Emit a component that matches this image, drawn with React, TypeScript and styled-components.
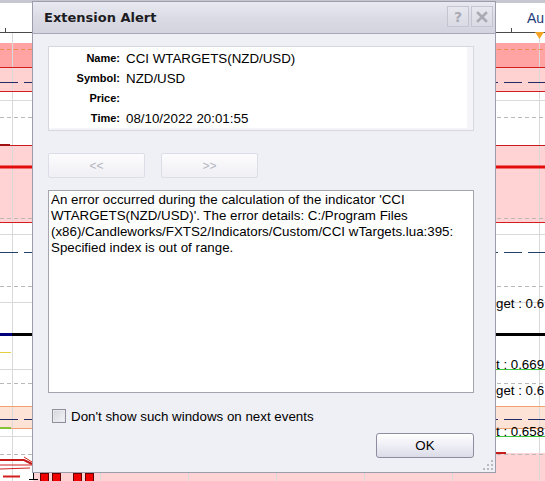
import React from "react";
import styled, { createGlobalStyle } from "styled-components";

const GlobalStyle = createGlobalStyle`
  html, body {
    margin: 0;
    padding: 0;
    background: #fff;
    overflow: hidden;
  }
`;

const W = 545;
const H = 481;

interface Band {
  x?: number;
  y: number;
  h: number;
  fill: string;
}

interface HLine {
  y: number;
  x1?: number;
  x2?: number;
  color: string;
  w?: number;
  dash?: string;
}

const GRID = "#d9d9d9";
const DASH_GRAY = "#b9b9b9";
const RED = "#d41e1e";
const NAVY = "#1d2b66";

const bands: Band[] = [
  { y: 43, h: 24, fill: "#ffa3a3" },
  { y: 67, h: 24, fill: "#ffd2d2" },
  { y: 145, h: 77, fill: "#ffd3d3" },
  { y: 406, h: 22, fill: "#fde3d5" },
  { x: 33, y: 453, h: 28, fill: "#ffd3d3" },
];

const lines: HLine[] = [
  { y: 32.5, color: "#4a4a4a" },
  { y: 49.5, color: "#f08c52", dash: "4 3" },
  { y: 67.5, color: RED },
  { y: 82.5, color: NAVY, dash: "18 6" },
  { y: 91.5, color: RED },
  { y: 100.5, color: GRID },
  { y: 117.5, color: DASH_GRAY, dash: "4 3" },
  { y: 145.5, color: "#c81c1c" },
  { y: 145, x1: 0, x2: 10, color: "#a01010", w: 2 },
  { y: 167, color: "#e30b0b", w: 3 },
  { y: 218.5, color: DASH_GRAY, dash: "4 3" },
  { y: 222.5, color: RED },
  { y: 234.5, color: GRID },
  { y: 252.5, color: "#23406c", dash: "18 6" },
  { y: 286.5, color: DASH_GRAY, dash: "4 3" },
  { y: 302.5, color: GRID },
  { y: 334.5, color: "#000", w: 3 },
  { y: 334.5, x1: 0, x2: 12, color: "#00007a", w: 3 },
  { y: 352.5, x1: 0, x2: 11, color: "#e2d040" },
  { y: 369.5, color: GRID },
  { y: 369.5, x1: 496, x2: W, color: "#3cc43c" },
  { y: 383.5, color: DASH_GRAY, dash: "4 3" },
  { y: 406.5, color: "#f2a070" },
  { y: 419.5, color: NAVY, dash: "18 6" },
  { y: 428.5, color: "#f2a070" },
  { y: 428, x1: 0, x2: 11, color: "#86c232", w: 2 },
  { y: 436.5, color: GRID },
  { y: 436.5, x1: 496, x2: W, color: "#3cc43c" },
  { y: 454.5, color: DASH_GRAY, dash: "4 3" },
  { y: 453, x1: 496, x2: 506, color: "#c81c1c", w: 2 },
  { y: 476.5, x1: 3, x2: 20, color: RED, w: 2 },
];

const gridX = [12, 100, 188, 276, 364, 452, 539];

const labels = [
  { y: 308, text: "get : 0.6" },
  { y: 369, text: "t : 0.669" },
  { y: 395, text: "get : 0.6" },
  { y: 436, text: "t : 0.658" },
];

const candles = [40, 52, 73, 85];

function Chart() {
  return (
    <ChartSvg width={W} height={H} viewBox={`0 0 ${W} ${H}`}>
      <rect x={0} y={0} width={W} height={3} fill="#c6c7d1" />
      {bands.map((b, i) => (
        <rect key={i} x={b.x ?? 0} y={b.y} width={W - (b.x ?? 0)} height={b.h} fill={b.fill} />
      ))}
      {gridX.map((x) => (
        <line key={x} x1={x + 0.5} x2={x + 0.5} y1={33} y2={H} stroke={GRID} />
      ))}
      {lines.map((l, i) => (
        <line
          key={i}
          x1={l.x1 ?? 0}
          x2={l.x2 ?? W}
          y1={l.y}
          y2={l.y}
          stroke={l.color}
          strokeWidth={l.w ?? 1}
          strokeDasharray={l.dash}
        />
      ))}
      {/* axis ticks and marker */}
      <line x1={5.5} x2={5.5} y1={28} y2={33} stroke="#4a4a4a" />
      <line x1={511.5} x2={511.5} y1={28} y2={33} stroke="#4a4a4a" />
      <polygon points="535,32 544,32 539.5,39" fill="#f5a524" />
      <text x={527} y={23} fontSize={14} fill="#233a78" fontFamily="Liberation Sans, Arial, sans-serif">
        Au
      </text>
      {/* candle bits lower left */}
      <polyline points="0,460 24,460 32,464" fill="none" stroke="#c41a1a" strokeWidth={2} />
      <polyline points="0,465 32,465" fill="none" stroke="#d42020" />
      <polyline points="24,457 32,462" fill="none" stroke="#d42020" />
      <polyline points="0,469 30,468" fill="none" stroke="#d42020" />
      <line x1={33.5} x2={33.5} y1={473} y2={480} stroke="#000" />
      <line x1={29} x2={38} y1={479.5} y2={479.5} stroke="#000" />
      {candles.map((x) => (
        <rect key={x} x={x + 0.5} y={473.5} width={8} height={9} fill="#f00000" stroke="#600" />
      ))}
      {labels.map((l, i) => (
        <text key={i} x={496} y={l.y} fontSize={13.3} fill="#000" fontFamily="Liberation Sans, Arial, sans-serif">
          {l.text}
        </text>
      ))}
    </ChartSvg>
  );
}

function Grip() {
  const dots = [
    [9, 1],
    [9, 5],
    [5, 5],
    [9, 9],
    [5, 9],
    [1, 9],
  ];
  return (
    <GripSvg width={12} height={12} viewBox="0 0 12 12">
      {dots.map(([x, y], i) => (
        <rect key={i} x={x} y={y} width={2} height={2} fill="#b9bac4" />
      ))}
    </GripSvg>
  );
}

const info = [
  { label: "Name:", value: "CCI WTARGETS(NZD/USD)" },
  { label: "Symbol:", value: "NZD/USD" },
  { label: "Price:", value: "" },
  { label: "Time:", value: "08/10/2022 20:01:55" },
];

export default function App() {
  return (
    <Page>
      <GlobalStyle />
      <Chart />
      <Dialog>
        <TitleBar>
          <Title>Extension Alert</Title>
          <CaptionButton>?</CaptionButton>
          <CaptionButton>
            <svg width="12" height="12" viewBox="0 0 12 12">
              <path d="M2 2 L10 10 M10 2 L2 10" stroke="#a9aab4" strokeWidth="2.6" strokeLinecap="square" />
            </svg>
          </CaptionButton>
        </TitleBar>
        <Body>
          <InfoPanel>
            {info.map((row) => (
              <React.Fragment key={row.label}>
                <InfoLabel>{row.label}</InfoLabel>
                <InfoValue>{row.value}</InfoValue>
              </React.Fragment>
            ))}
          </InfoPanel>
          <NavRow>
            <NavButton disabled>&lt;&lt;</NavButton>
            <NavButton disabled>&gt;&gt;</NavButton>
          </NavRow>
          <MessageBox>
            An error occurred during the calculation of the indicator 'CCI
            <br />
            WTARGETS(NZD/USD)'. The error details: C:/Program Files
            <br />
            (x86)/Candleworks/FXTS2/Indicators/Custom/CCI wTargets.lua:395:
            <br />
            Specified index is out of range.
          </MessageBox>
          <CheckRow>
            <CheckBox />
            <CheckLabel>Don't show such windows on next events</CheckLabel>
          </CheckRow>
          <Footer>
            <OkButton>OK</OkButton>
          </Footer>
        </Body>
        <Grip />
      </Dialog>
    </Page>
  );
}

const Page = styled.div`
  position: relative;
  width: ${W}px;
  height: ${H}px;
  overflow: hidden;
  background: #fff;
  font-family: "Liberation Sans", Arial, sans-serif;
`;

const ChartSvg = styled.svg`
  display: block;
`;

const Dialog = styled.div`
  position: absolute;
  left: 32px;
  top: 1px;
  width: 464px;
  height: 472px;
  box-sizing: border-box;
  border: 1px solid #9c9daa;
  background: #efeff6;
  display: flex;
  flex-direction: column;
  color: #000;
`;

const TitleBar = styled.div`
  height: 32px;
  box-sizing: border-box;
  flex: none;
  display: flex;
  align-items: center;
  padding: 0 2px 2px 11px;
  background: linear-gradient(#e9e9f1, #d9dae4 55%, #d2d3de);
  border-bottom: 1px solid #a8a9b8;
`;

const Title = styled.div`
  flex: 1;
  font-family: "DejaVu Sans", Verdana, sans-serif;
  font-weight: bold;
  font-size: 13px;
  color: #1c1c22;
  padding-top: 2px;
`;

const CaptionButton = styled.div`
  width: 22px;
  height: 21px;
  box-sizing: border-box;
  margin-left: 2px;
  border: 1px solid #c4c5d0;
  background: linear-gradient(#e7e7ef, #dadae4);
  display: flex;
  align-items: center;
  justify-content: center;
  font-family: "DejaVu Sans", Verdana, sans-serif;
  font-weight: bold;
  font-size: 14px;
  color: #a9aab4;
`;

const Body = styled.div`
  flex: 1;
  display: flex;
  flex-direction: column;
  padding: 12px 21px 0 15px;
`;

const InfoPanel = styled.div`
  height: 85px;
  box-sizing: border-box;
  border: 1px solid #d6d7e0;
  background: #fff;
  box-shadow: inset -6px -2px 0 #f4f4f9;
  display: grid;
  grid-template-columns: 71px 1fr;
  grid-auto-rows: 20px;
  column-gap: 6px;
  align-items: center;
  padding-top: 1px;
`;

const InfoLabel = styled.div`
  text-align: right;
  font-weight: bold;
  font-size: 11px;
`;

const InfoValue = styled.div`
  font-size: 13.33px;
`;

const NavRow = styled.div`
  display: flex;
  gap: 16px;
  margin-top: 22px;
`;

const NavButton = styled.button`
  width: 97px;
  height: 25px;
  box-sizing: border-box;
  border: 1px solid #dcdde6;
  border-radius: 2px;
  background: linear-gradient(#fcfcfe, #efeff4);
  color: #b4b5be;
  font-family: "Liberation Sans", Arial, sans-serif;
  font-size: 12px;
  padding: 0;
`;

const MessageBox = styled.div`
  margin-top: 12px;
  height: 203px;
  box-sizing: border-box;
  border: 1px solid #a4a5ae;
  background: #fff;
  padding: 1px 2px;
  font-size: 13.33px;
  line-height: 16px;
  white-space: nowrap;
  overflow: hidden;
`;

const CheckRow = styled.div`
  display: flex;
  align-items: center;
  gap: 5px;
  margin-top: 16px;
  padding-left: 4px;
  height: 14px;
`;

const CheckBox = styled.span`
  width: 14px;
  height: 14px;
  box-sizing: border-box;
  border: 1px solid #8f9099;
  background: linear-gradient(135deg, #d4d5dc, #f4f4f8);
  box-shadow: inset 0 0 0 1px #e8e8ee;
`;

const CheckLabel = styled.span`
  font-size: 13.33px;
`;

const Footer = styled.div`
  display: flex;
  justify-content: flex-end;
  margin-top: 10px;
`;

const OkButton = styled.button`
  width: 98px;
  height: 25px;
  box-sizing: border-box;
  border: 1px solid #8c8da0;
  border-radius: 3px;
  background: linear-gradient(#ffffff, #ececf4 55%, #dcdce8);
  font-family: "Liberation Sans", Arial, sans-serif;
  font-size: 13.33px;
  color: #000;
  padding: 0;
`;

const GripSvg = styled.svg`
  position: absolute;
  right: 1px;
  bottom: 1px;
`;
